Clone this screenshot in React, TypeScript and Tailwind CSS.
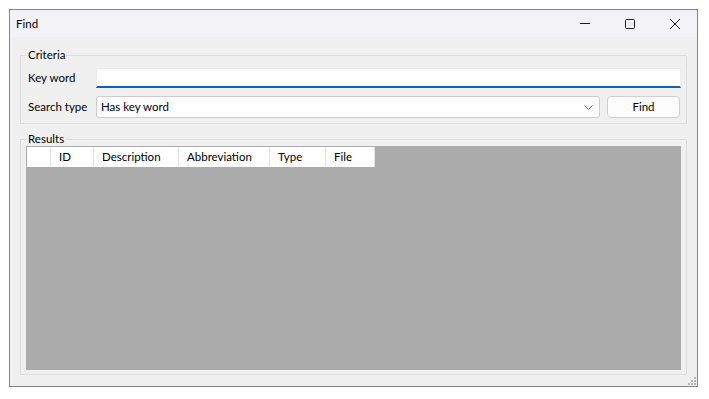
import React from 'react';

const columns = [
  { label: '', width: 'w-[24px]' },
  { label: 'ID', width: 'w-[43px]' },
  { label: 'Description', width: 'w-[85px]' },
  { label: 'Abbreviation', width: 'w-[91px]' },
  { label: 'Type', width: 'w-[56px]' },
  { label: 'File', width: 'w-[49px]' },
];

const TitleButtons: React.FC = () => (
  <div className="flex h-full">
    <div className="w-[45px] h-full flex items-center justify-center">
      <svg width="12" height="12" viewBox="0 0 12 12">
        <line x1="1" y1="5.5" x2="11" y2="5.5" stroke="#1a1a1a" strokeWidth="1" />
      </svg>
    </div>
    <div className="w-[45px] h-full flex items-center justify-center">
      <svg width="12" height="12" viewBox="0 0 12 12">
        <rect x="1.5" y="1.5" width="9" height="9" rx="1" fill="none" stroke="#1a1a1a" strokeWidth="1" />
      </svg>
    </div>
    <div className="w-[45px] h-full flex items-center justify-center">
      <svg width="12" height="12" viewBox="0 0 12 12">
        <path d="M1 1 L11 11 M11 1 L1 11" stroke="#1a1a1a" strokeWidth="1" />
      </svg>
    </div>
  </div>
);

const App: React.FC = () => {
  return (
    <div
      className="w-[709px] h-[399px] bg-white pt-[9px] pl-[9px] text-[11.5px] text-black"
      style={{ fontFamily: 'Lato, "Liberation Sans", sans-serif' }}
    >
      <div className="w-[689px] h-[378px] border border-[#858585] flex flex-col">
        {/* title bar */}
        <div className="h-[27px] bg-[#f3f2f7] flex items-center justify-between">
          <span className="pl-[6px] leading-none">Find</span>
          <TitleButtons />
        </div>

        {/* client area */}
        <div className="flex-1 bg-[#f0f0f0] px-[10px] pt-[18px] relative">
          {/* Criteria */}
          <div className="relative h-[69px] border border-[#dcdcdc] pl-[7px] pr-[5px] pt-[12px]">
            <span className="absolute top-[-9px] left-[6px] px-[1px] bg-[#f0f0f0] leading-[15px]">Criteria</span>
            <div className="flex items-center h-[20px]">
              <span className="w-[68px] shrink-0">Key word</span>
              <div className="flex-1 h-[20px] bg-white border border-[#ececec] border-b-2 border-b-[#0067c0]" />
            </div>
            <div className="flex items-center h-[22px] mt-[8px]">
              <span className="w-[68px] shrink-0">Search type</span>
              <div className="w-[504px] h-[22px] bg-[#fefefe] border border-[#cccccc] rounded-[3px] flex items-center justify-between pl-[4px] pr-[6px]">
                <span>Has key word</span>
                <svg width="9" height="5" viewBox="0 0 9 5">
                  <path d="M0.5 0.5 L4.5 4.5 L8.5 0.5" fill="none" stroke="#606060" strokeWidth="1" />
                </svg>
              </div>
              <button className="ml-[7px] w-[73px] h-[22px] bg-[#fdfdfd] border border-[#d0d0d0] rounded-[4px] flex items-center justify-center">
                Find
              </button>
            </div>
          </div>

          {/* Results */}
          <div className="relative mt-[15px] h-[236px] border border-[#dcdcdc] pt-[6px] px-[5px]">
            <span className="absolute top-[-9px] left-[6px] px-[1px] bg-[#f0f0f0] leading-[15px]">Results</span>
            <div className="h-[224px] bg-[#ababab] pt-[1px] pl-[1px]">
              <div className="flex h-[20px] w-max bg-white">
                {columns.map((col, i) => (
                  <div
                    key={i}
                    className={`${col.width} h-full border-r border-[#e3e3e3] flex items-center pl-[8px]`}
                  >
                    {col.label}
                  </div>
                ))}
              </div>
            </div>
          </div>

          {/* size grip */}
          <svg className="absolute right-[1px] bottom-[1px]" width="8" height="8" viewBox="0 0 8 8">
            <rect x="6" y="0" width="2" height="2" fill="#b4b4b4" />
            <rect x="3" y="3" width="2" height="2" fill="#b4b4b4" />
            <rect x="6" y="3" width="2" height="2" fill="#b4b4b4" />
            <rect x="0" y="6" width="2" height="2" fill="#b4b4b4" />
            <rect x="3" y="6" width="2" height="2" fill="#b4b4b4" />
            <rect x="6" y="6" width="2" height="2" fill="#b4b4b4" />
          </svg>
        </div>
      </div>
    </div>
  );
};

export default App;
